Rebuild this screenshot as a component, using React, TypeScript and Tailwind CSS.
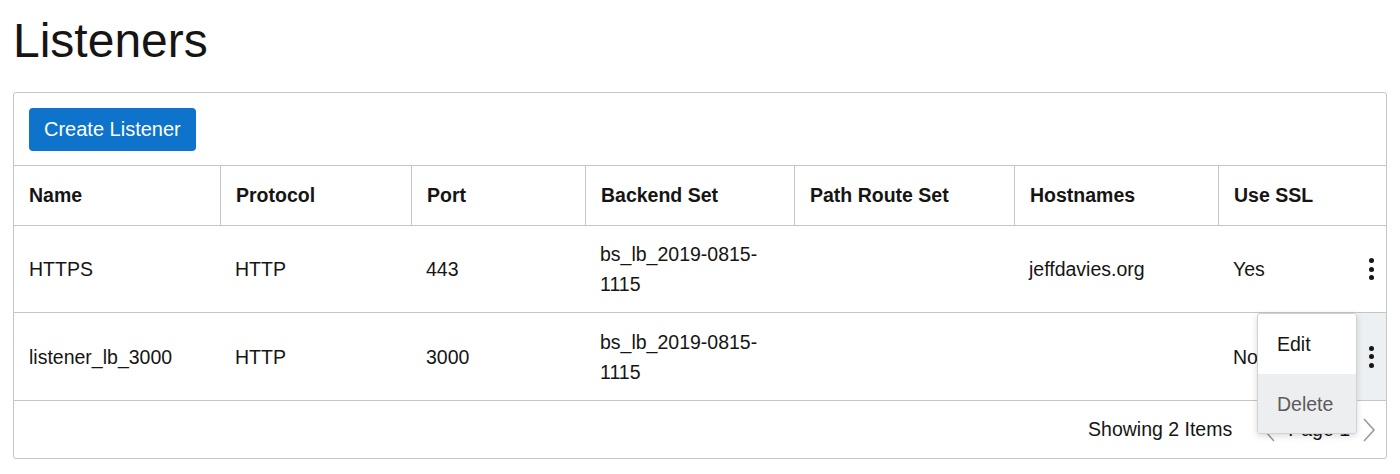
import { useState } from 'react'

type Listener = { name: string; protocol: string; port: string; backend: string; pathRoute: string; hostnames: string; ssl: string }

const rows: Listener[] = [
  { name: 'HTTPS', protocol: 'HTTP', port: '443', backend: 'bs_lb_2019-0815-1115', pathRoute: '', hostnames: 'jeffdavies.org', ssl: 'Yes' },
  { name: 'listener_lb_3000', protocol: 'HTTP', port: '3000', backend: 'bs_lb_2019-0815-1115', pathRoute: '', hostnames: '', ssl: 'No' },
]

const cols = 'grid grid-cols-[206px_191px_174px_209px_220px_204px_1fr]'

export default function App() {
  const [open] = useState(1)
  return (
    <div className="min-h-screen bg-white px-[13px] pt-[17px] text-[#161513] font-['Liberation_Sans',Arial,sans-serif]">
      <h1 className="text-[48px] leading-[48px] font-normal">Listeners</h1>
      <div className="mt-[27px] w-[1374px] rounded-[3px] border border-[#c6c6c6]">
        <div className="h-[72px] px-[15px] flex items-center">
          <button className="h-[43px] px-[15px] rounded-[4px] bg-[#0d73cb] text-white text-[20px]">Create Listener</button>
        </div>
        <div className={`${cols} h-[60px] border-t border-[#c6c6c6] text-[19.5px] font-bold`}>
          {['Name', 'Protocol', 'Port', 'Backend Set', 'Path Route Set', 'Hostnames', 'Use SSL'].map((h, i) => (
            <div key={h} className={`flex items-center px-[15px] ${i > 0 ? 'border-l border-[#c6c6c6]' : ''}`}>{h}</div>
          ))}
        </div>
        {rows.map((r, idx) => (
          <div key={r.name} className={`${cols} relative border-t border-[#c6c6c6] text-[19.5px] leading-[30px] ${idx === 0 ? 'h-[87px]' : 'h-[88px]'}`}>
            <Cell>{r.name}</Cell>
            <Cell>{r.protocol}</Cell>
            <Cell>{r.port}</Cell>
            <Cell>{r.backend}</Cell>
            <Cell>{r.pathRoute}</Cell>
            <Cell>{r.hostnames}</Cell>
            <div className="flex items-center justify-between pl-[15px] min-w-0">
              <span>{r.ssl}</span>
              <button className={`self-stretch w-[29px] flex flex-col items-center justify-center gap-[3.5px] ${open === idx ? 'bg-[#edf0f3]' : ''}`}>
                <Dot /><Dot /><Dot />
              </button>
            </div>
            {open === idx && (
              <div className="absolute right-[29px] top-0 w-[100px] bg-white border border-[#d2d2d2] rounded-[3px] shadow-[0_2px_6px_rgba(0,0,0,0.15)] z-10 overflow-hidden">
                <div className="h-[60px] px-[19px] flex items-center">Edit</div>
                <div className="h-[59px] px-[19px] flex items-center bg-[#eceeef] text-[#5b5b5b]">Delete</div>
              </div>
            )}
          </div>
        ))}
        <div className="h-[58px] border-t border-[#c6c6c6] flex items-center justify-end pr-[10px] text-[19.5px]">
          <span>Showing 2 Items</span>
          <div className="ml-[30px] flex items-center gap-[12px] text-[#8a8a8a]">
            <Chevron dir="left" />
            <span className="text-[#161513]">Page 1</span>
            <Chevron dir="right" />
          </div>
        </div>
      </div>
    </div>
  )
}

function Cell({ children }: { children: React.ReactNode }) {
  return (
    <div className="flex items-center px-[15px] min-w-0">
      <span className="block min-w-0 break-words">{children}</span>
    </div>
  )
}

function Dot() {
  return <span className="block w-[5px] h-[5px] rounded-full bg-[#161513]" />
}

function Chevron({ dir }: { dir: 'left' | 'right' }) {
  return (
    <svg width="14" height="26" viewBox="0 0 14 26" fill="none" stroke="#9a9a9a" strokeWidth="1.6">
      {dir === 'left' ? <path d="M12 2 L2 13 L12 24" /> : <path d="M2 2 L12 13 L2 24" />}
    </svg>
  )
}
